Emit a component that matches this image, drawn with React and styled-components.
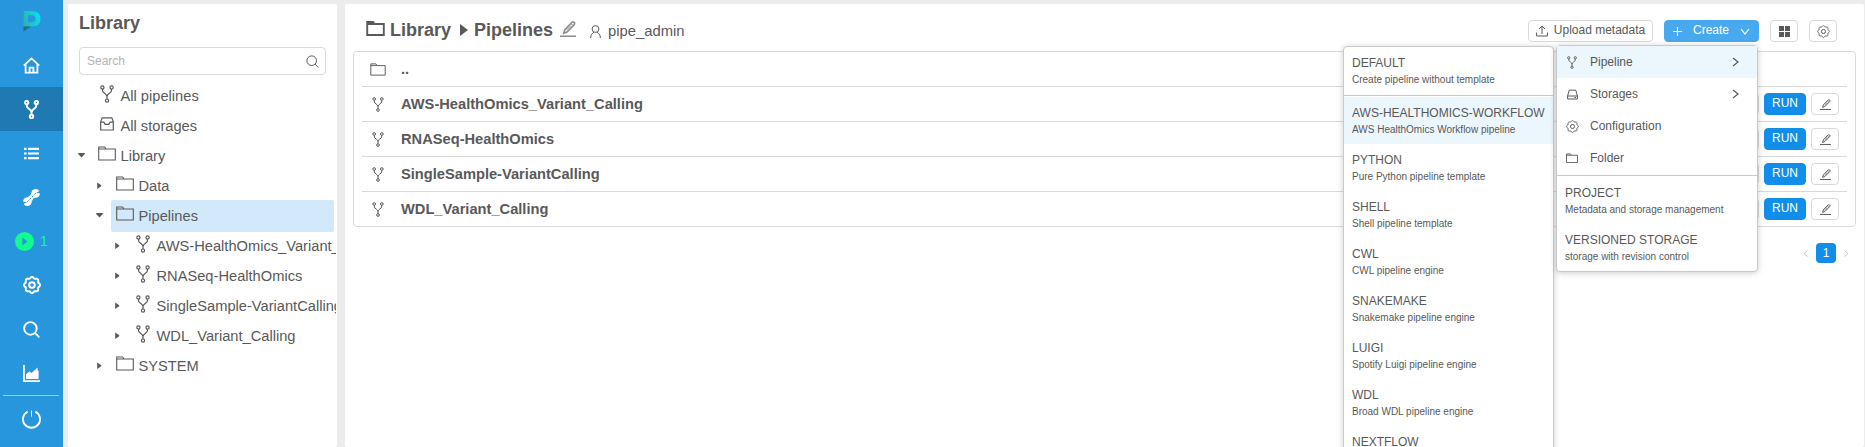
import React from "react";
import styled, { createGlobalStyle, css } from "styled-components";

const Global = createGlobalStyle`
  * { box-sizing: border-box; }
  html, body { margin: 0; padding: 0; }
  body {
    font-family: "Liberation Sans", Arial, sans-serif;
    font-size: 12px;
    color: #595959;
    background: #ececec;
    overflow: hidden;
  }
`;

const Page = styled.div`
  position: relative;
  display: flex;
  height: 100vh;
  overflow: hidden;
`;

const Nav = styled.nav`
  width: 63px;
  flex: none;
  display: flex;
  flex-direction: column;
  background: #2796dd;
  color: #fff;
`;

const NavItem = styled.div`
  height: ${(p) => p.$h || 44}px;
  flex: none;
  display: flex;
  align-items: center;
  justify-content: center;
  gap: 6px;
  font-size: 14px;
  color: ${(p) => p.$color || "#fff"};
  background: ${(p) => (p.$active ? "#1f7ab4" : "transparent")};
  padding-left: ${(p) => p.$shift || 0}px;
  svg { display: block; flex: none; }
`;

const NavLine = styled.div`
  height: 1px;
  flex: none;
  margin: 0 4px 0 3px;
  background: #9accee;
`;

const Panel = styled.section`
  background: #fff;
  border-radius: 2px;
  margin-top: 4px;
  overflow: hidden;
`;

const TreePanel = styled(Panel)`
  width: 269px;
  flex: none;
  margin-left: 5px;
`;

const Tree = styled.div`
  margin-right: 1px;
  overflow: hidden;
`;

const PanelTitle = styled.h2`
  margin: 0;
  padding: 0 11px;
  font-size: 18px;
  line-height: 20px;
  margin-top: 9px;
  font-weight: bold;
`;

const SearchBox = styled.div`
  margin: 14px 11px 6px;
  width: 247px;
  height: 28px;
  border: 1px solid #d9d9d9;
  border-radius: 4px;
  padding: 0 6px 0 7px;
  display: flex;
  align-items: center;
  justify-content: space-between;
  color: #b4b4b4;
  svg { color: #595959; }
`;

const TreeRow = styled.div`
  height: 30px;
  display: flex;
  align-items: center;
  padding-left: ${(p) => 1 + p.$level * 18}px;
`;

const CaretBox = styled.span`
  width: 24px;
  flex: none;
  display: flex;
  justify-content: center;
`;

const TreeTitle = styled.div`
  height: 32px;
  flex: ${(p) => (p.$selected ? "1" : "none")};
  margin-right: 2px;
  padding-left: 5px;
  display: flex;
  align-items: center;
  white-space: nowrap;
  font-size: 14.67px;
  border-radius: 2px;
  background: ${(p) => (p.$selected ? "#d2e8fb" : "transparent")};
`;

const TreeIcon = styled.span`
  width: 18px;
  height: 18px;
  margin: 0 4.5px 5px 0;
  display: flex;
  align-items: center;
  justify-content: center;
`;

const Main = styled(Panel)`
  flex: 1;
  margin-left: 8px;
  margin-right: 1px;
  padding: 0 8px;
`;

const Header = styled.header`
  height: 47px;
  display: flex;
  align-items: center;
  justify-content: space-between;
  padding: 7px 19px 0 13px;
`;

const Crumbs = styled.div`
  display: flex;
  align-items: center;
  font-size: 18px;
  font-weight: bold;
  line-height: 22px;
  padding-bottom: 2px;
  svg { flex: none; }
`;

const CrumbIcon = styled.span`
  display: flex;
  margin-bottom: 3px;
`;

const Crumb = styled.span`
  margin-left: ${(p) => p.$gap || 0}px;
`;

const CrumbCaret = styled.span`
  width: 0;
  border-left: 8px solid #595959;
  border-top: 6.5px solid transparent;
  border-bottom: 6.5px solid transparent;
  margin: 0 6px 0 9px;
`;

const EditMark = styled.span`
  display: flex;
  margin: 0 0 3px 7px;
`;

const Owner = styled.span`
  display: flex;
  align-items: center;
  gap: 7px;
  margin-left: 14px;
  font-size: 14.8px;
  font-weight: normal;
  padding-top: 2px;
`;

const Actions = styled.div`
  display: flex;
`;

const Button = styled.button`
  font: inherit;
  height: 22px;
  width: ${(p) => p.$w}px;
  margin-left: ${(p) => p.$ml || 0}px;
  padding: 0;
  flex: none;
  display: flex;
  align-items: center;
  justify-content: center;
  gap: 6px;
  color: #595959;
  background: #fff;
  border: 1px solid #d9d9d9;
  border-radius: 4px;
  ${(p) => p.$primary && css`
    color: #fff;
    background: #108ee9;
    border-color: #108ee9;
  `}
  ${(p) => p.$open && css`
    color: #fff;
    background: #49a9ee;
    border-color: #49a9ee;
    gap: 11px;
  `}
`;

const Label = styled.span`
  line-height: 14px;
  padding-bottom: 2px;
`;

const List = styled.div`
  border: 1px solid #d9d9d9;
  border-radius: 4px;
  padding: 0 8px;
`;

const ListRow = styled.div`
  height: 35px;
  display: flex;
  align-items: center;
  border-bottom: 1px solid #d9d9d9;
  padding-right: 8px;
  &:last-child { border-bottom: none; height: 34px; }
`;

const RowIcon = styled.span`
  width: 32px;
  display: flex;
  justify-content: center;
`;

const RowName = styled.span`
  flex: 1;
  font-size: 14.67px;
  font-weight: bold;
  padding-left: 7px;
`;

const Pager = styled.div`
  display: flex;
  justify-content: flex-end;
  align-items: center;
  margin-top: 16px;
  padding-right: 7px;
  color: #c4c4c4;
`;

const PageNumber = styled.span`
  width: 20px;
  height: 20px;
  margin: 0 8px;
  border-radius: 4px;
  background: #108ee9;
  color: #fff;
  font-size: 12px;
  line-height: 20px;
  text-align: center;
`;

const Menu = styled.div`
  position: absolute;
  top: ${(p) => p.$top}px;
  left: ${(p) => p.$left}px;
  width: ${(p) => p.$w}px;
  background: #fff;
  border: 1px solid #c9c9c9;
  border-radius: 4px;
  box-shadow: 0 1px 6px rgba(0, 0, 0, 0.2);
`;

const MenuItem = styled.div`
  height: 32px;
  display: flex;
  align-items: center;
  padding: 0 18px 0 7px;
  background: ${(p) => (p.$active ? "#ecf6fd" : "transparent")};
`;

const MenuIcon = styled.span`
  width: 16px;
  margin-right: 10px;
  display: flex;
  justify-content: center;
`;

const MenuText = styled.span`
  flex: 1;
`;

const Template = styled.div`
  height: 47px;
  padding: 7px 8px 0;
  white-space: nowrap;
  background: ${(p) => (p.$active ? "#ecf6fd" : "transparent")};
`;

const TemplateName = styled.div`
  line-height: 18px;
`;

const TemplateInfo = styled.div`
  font-size: 10px;
  line-height: 15px;
`;

const MenuDivider = styled.div`
  height: 1px;
  margin: 1px 0;
  background: #c9c9c9;
`;

const Svg = ({ w, h, box, sw = 1, children }) => (
  <svg width={w} height={h} viewBox={box} fill="none" stroke="currentColor" strokeWidth={sw}>
    {children}
  </svg>
);

const Fork = ({ w = 14, h = 18, sw = 1.2 }) => (
  <Svg w={w} h={h} box="0 0 14 18" sw={sw}>
    <circle cx="2.4" cy="2.4" r="1.6" />
    <circle cx="11.6" cy="2.4" r="1.6" />
    <circle cx="7" cy="15.6" r="1.6" />
    <path d="M2.6 4V6C2.8 8 7 8.8 7 11.5V14M11.4 4V6C11.2 8 7 8.8 7 11.5" />
  </Svg>
);

const Folder = ({ w = 18, h = 15, sw = 1.1 }) => (
  <Svg w={w} h={h} box="0 0 18 15" sw={sw}>
    <path d="M.7 14V1H6.6L8 3H17.3V14ZM.7 3H8" />
  </Svg>
);

const Inbox = () => (
  <Svg w={14} h={14} box="0 0 14 14" sw={1.2}>
    <path d="M.7 4.6L2.2.8H11.8L13.3 4.6V13H.7ZM.7 5.2H3.8L5.2 7.4H8.8L10.2 5.2H13.3" />
  </Svg>
);

const Drive = () => (
  <Svg w={11} h={11} box="0 0 11 11" sw={1}>
    <path d="M.6 7L2.2 1.2H8.8L10.4 7V10H.6ZM.6 7H10.4M7.5 8.5H9" />
  </Svg>
);

const gearOutline = Array.from({ length: 96 }, (_, i) => {
  const a = (i / 96) * Math.PI * 2;
  const r = 6.6 + 0.6 * Math.cos(8 * a);
  return `${i ? "L" : "M"}${(8 + r * Math.cos(a)).toFixed(2)} ${(8 + r * Math.sin(a)).toFixed(2)}`;
}).join("") + "Z";

const Gear = ({ s = 12, sw = 1 }) => (
  <Svg w={s} h={s} box="0 0 16 16" sw={(sw * 16) / s}>
    <path d={gearOutline} />
    <circle cx="8" cy="8" r="2.5" />
  </Svg>
);

const Glass = ({ s = 13, sw = 1 }) => (
  <Svg w={s} h={s} box="0 0 16 16" sw={(sw * 16) / s}>
    <circle cx="7" cy="7" r="5.9" />
    <path d="M11.2 11.2L15.4 15.4" />
  </Svg>
);

const Pencil = ({ s = 11, sw = 1, color = "currentColor" }) => (
  <svg width={s} height={s} viewBox="0 0 16 16" fill="none" stroke={color} strokeWidth={(sw * 16) / s}>
    <path d="M0 15.2H16" />
    <path d="M3.8 12.2L4.8 8.6L12 1.3Q13 .5 14 1.4Q15.2 2.4 14.2 3.6L7 11Z" />
    <path d="M11 2.8L13 4.6M6.6 8.8L10.8 4.8" strokeWidth="1" />
  </svg>
);

const Chevron = ({ w = 7, h = 10, sw = 1.2, d = "M1 1L6 5L1 9" }) => (
  <Svg w={w} h={h} box={`0 0 ${w} ${h}`} sw={sw}>
    <path d={d} />
  </Svg>
);

const TreeCaret = ({ open }) => (
  <svg width="7" height="8" viewBox="0 0 7 8" fill="currentColor">
    <path d={open ? "M.2 1H6.8V2L3.5 5.5L.2 2Z" : "M1.2 .5V7L5.2 4.2V3.3Z"} />
  </svg>
);

const Logo = () => (
  <svg width="18" height="21" viewBox="0 0 18 21">
    <defs>
      <linearGradient id="mark" x1="0" y1="0.6" x2="1" y2="0.3">
        <stop offset="0" stopColor="#2bb3b4" />
        <stop offset="1" stopColor="#05e1ea" />
      </linearGradient>
    </defs>
    <path fill="url(#mark)" fillRule="evenodd" d="M.8 0H9.5Q17.5.6 17.5 8T9.5 15.5H.5ZM5 4.3V11.2H9Q12.5 11 12.5 7.8T9 4.3Z" />
    <path fill="#23707c" d="M.5 15.5H8L.5 20.5Z" />
  </svg>
);

const tree = [
  { level: 0, icon: "fork", name: "All pipelines" },
  { level: 0, icon: "inbox", name: "All storages" },
  { level: 0, icon: "folder", name: "Library", caret: "open" },
  { level: 1, icon: "folder", name: "Data", caret: "closed" },
  { level: 1, icon: "folder", name: "Pipelines", caret: "open", selected: true },
  { level: 2, icon: "fork", name: "AWS-HealthOmics_Variant_Calling", caret: "closed" },
  { level: 2, icon: "fork", name: "RNASeq-HealthOmics", caret: "closed" },
  { level: 2, icon: "fork", name: "SingleSample-VariantCalling", caret: "closed" },
  { level: 2, icon: "fork", name: "WDL_Variant_Calling", caret: "closed" },
  { level: 1, icon: "folder", name: "SYSTEM", caret: "closed" },
];

const treeIcons = { fork: <Fork />, inbox: <Inbox />, folder: <Folder /> };

const pipelines = [
  "AWS-HealthOmics_Variant_Calling",
  "RNASeq-HealthOmics",
  "SingleSample-VariantCalling",
  "WDL_Variant_Calling",
];

const templates = [
  ["AWS-HEALTHOMICS-WORKFLOW", "AWS HealthOmics Workflow pipeline"],
  ["PYTHON", "Pure Python pipeline template"],
  ["SHELL", "Shell pipeline template"],
  ["CWL", "CWL pipeline engine"],
  ["SNAKEMAKE", "Snakemake pipeline engine"],
  ["LUIGI", "Spotify Luigi pipeline engine"],
  ["WDL", "Broad WDL pipeline engine"],
  ["NEXTFLOW", ""],
];

const createItems = [
  { name: "Pipeline", icon: <Fork w={10} h={13} sw={1.3} />, sub: true, active: true },
  { name: "Storages", icon: <Drive />, sub: true },
  { name: "Configuration", icon: <Gear s={13} /> },
  { name: "Folder", icon: <Folder w={12} h={10.5} sw={1.4} /> },
];

function TemplateItem({ name, info, active }) {
  return (
    <Template $active={active}>
      <TemplateName>{name}</TemplateName>
      <TemplateInfo>{info}</TemplateInfo>
    </Template>
  );
}

function Navigation() {
  return (
    <Nav>
      <NavItem $h={43} $shift={1}><Logo /></NavItem>
      <NavItem>
        <Svg w={17} h={17} box="0 0 17 17" sw={1.8}>
          <path d="M.8 8.6L8.5 1.4L16.2 8.6M2.6 7.5V15.6H14.4V7.5M6.6 15.6V10.6H10.4V15.6" />
        </Svg>
      </NavItem>
      <NavItem $active><Fork w={15} h={19} sw={1.9} /></NavItem>
      <NavItem>
        <Svg w={15} h={13} box="0 0 15 13" sw={2.2}>
          <path d="M0 1.8H2.6M4 1.8H15M0 6.5H2.6M4 6.5H15M0 11.2H2.6M4 11.2H15" />
        </Svg>
      </NavItem>
      <NavItem>
        <svg width="17" height="17" viewBox="0 0 17 17" fill="currentColor">
          <path d="M8.4 4Q8.2 6.4 4.6 8.2L8.8 12.4Q9.6 9.2 12.4 8.6Z" />
          <circle cx="12.6" cy="4.4" r="4.3" />
          <circle cx="4.4" cy="12.6" r="4.3" />
          <path d="M4.2 12.8L12.8 4.2" stroke="#2796dd" strokeWidth="1" strokeDasharray="1.8 1.6" />
          <path d="M13.2 3.8L17 1.8V4.6ZM3.8 13.2L0 15.2V12.4Z" fill="#2796dd" />
        </svg>
      </NavItem>
      <NavItem $color="#11fc8d">
        <svg width="19" height="19" viewBox="0 0 19 19">
          <circle cx="9.5" cy="9.5" r="9.5" fill="#11fc8d" />
          <path d="M7.3 5.5L12.7 9.5L7.3 13.5Z" fill="#2796dd" />
        </svg>
        <span>1</span>
      </NavItem>
      <NavItem><Gear s={18} sw={2} /></NavItem>
      <NavItem><Glass s={17} sw={1.9} /></NavItem>
      <NavItem>
        <svg width="17" height="17" viewBox="0 0 17 17" fill="currentColor">
          <path d="M0 0H1.8V15.2H17V17H0ZM3 14V9.5L6.2 6.4L8.6 8L14.6 2.5V5L15.6 6V14Z" />
        </svg>
      </NavItem>
      <NavLine />
      <NavItem $h={46}>
        <Svg w={19} h={19} box="0 0 19 19" sw={1.9}>
          <path d="M5.6 1.7A8.5 8.5 0 1 0 13.4 1.7" />
          <path d="M9.5 .5V6.5" strokeWidth="1" />
        </Svg>
      </NavItem>
    </Nav>
  );
}

export default function App() {
  return (
    <Page>
      <Global />
      <Navigation />

      <TreePanel>
        <PanelTitle>Library</PanelTitle>
        <SearchBox>
          <span>Search</span>
          <Glass s={13} />
        </SearchBox>
        <Tree>
          {tree.map((n) => (
            <TreeRow key={n.name} $level={n.level}>
              <CaretBox>{n.caret && <TreeCaret open={n.caret === "open"} />}</CaretBox>
              <TreeTitle $selected={n.selected}>
                <TreeIcon>{treeIcons[n.icon]}</TreeIcon>
                {n.name}
              </TreeTitle>
            </TreeRow>
          ))}
        </Tree>
      </TreePanel>

      <Main>
        <Header>
          <Crumbs>
            <CrumbIcon><Folder w={19} h={15} sw={1.9} /></CrumbIcon>
            <Crumb $gap={5}>Library</Crumb>
            <CrumbCaret />
            <Crumb>Pipelines</Crumb>
            <EditMark><Pencil s={16} sw={1.6} color="#8c8c8c" /></EditMark>
            <Owner>
              <Svg w={11} h={13} box="0 0 11 13">
                <circle cx="5.5" cy="4" r="3.4" />
                <path d="M.6 13C.6 9.6 2.6 8 4 7.2M10.4 13C10.4 9.6 8.4 8 7 7.2" />
              </Svg>
              pipe_admin
            </Owner>
          </Crumbs>
          <Actions>
            <Button $w={125}>
              <Svg w={12} h={12} box="0 0 12 12">
                <path d="M.6 7.5V11H11.4V7.5M6 9V1.2M3 4L6 1L9 4" />
              </Svg>
              <Label>Upload metadata</Label>
            </Button>
            <Button $w={95} $ml={11} $open>
              <Svg w={9} h={9} box="0 0 9 9">
                <path d="M0 4.5H9M4.5 0V9" />
              </Svg>
              <Label>Create</Label>
              <Chevron w={10} h={7} d="M1 1L5 6L9 1" />
            </Button>
            <Button $w={28} $ml={11}>
              <svg width="11" height="11" viewBox="0 0 11 11" fill="currentColor">
                <path d="M0 0H5V5H0ZM6 0H11V5H6ZM0 6H5V11H0ZM6 6H11V11H6Z" />
              </svg>
            </Button>
            <Button $w={28} $ml={11}><Gear s={13} /></Button>
          </Actions>
        </Header>

        <List>
          <ListRow>
            <RowIcon><Folder w={16} h={13} sw={1.1} /></RowIcon>
            <RowName>..</RowName>
          </ListRow>
          {pipelines.map((name) => (
            <ListRow key={name}>
              <RowIcon><Fork w={12} h={15} sw={1.2} /></RowIcon>
              <RowName>{name}</RowName>
              <Button $w={28}><Pencil /></Button>
              <Button $w={42} $ml={5} $primary><Label>RUN</Label></Button>
              <Button $w={28} $ml={5}><Pencil /></Button>
            </ListRow>
          ))}
        </List>

        <Pager>
          <Chevron w={5} h={7} sw={1} d="M4.5 .5L1 3.5L4.5 6.5" />
          <PageNumber>1</PageNumber>
          <Chevron w={5} h={7} sw={1} d="M.5 .5L4 3.5L.5 6.5" />
        </Pager>
      </Main>

      <Menu $top={46} $left={1343} $w={211}>
        <TemplateItem name="DEFAULT" info="Create pipeline without template" />
        <MenuDivider />
        {templates.map(([name, info], i) => (
          <TemplateItem key={name} name={name} info={info} active={i === 0} />
        ))}
      </Menu>

      <Menu $top={45} $left={1556} $w={202}>
        {createItems.map((item) => (
          <MenuItem key={item.name} $active={item.active}>
            <MenuIcon>{item.icon}</MenuIcon>
            <MenuText>{item.name}</MenuText>
            {item.sub && <Chevron />}
          </MenuItem>
        ))}
        <MenuDivider />
        <TemplateItem name="PROJECT" info="Metadata and storage management" />
        <TemplateItem name="VERSIONED STORAGE" info="storage with revision control" />
      </Menu>
    </Page>
  );
}
